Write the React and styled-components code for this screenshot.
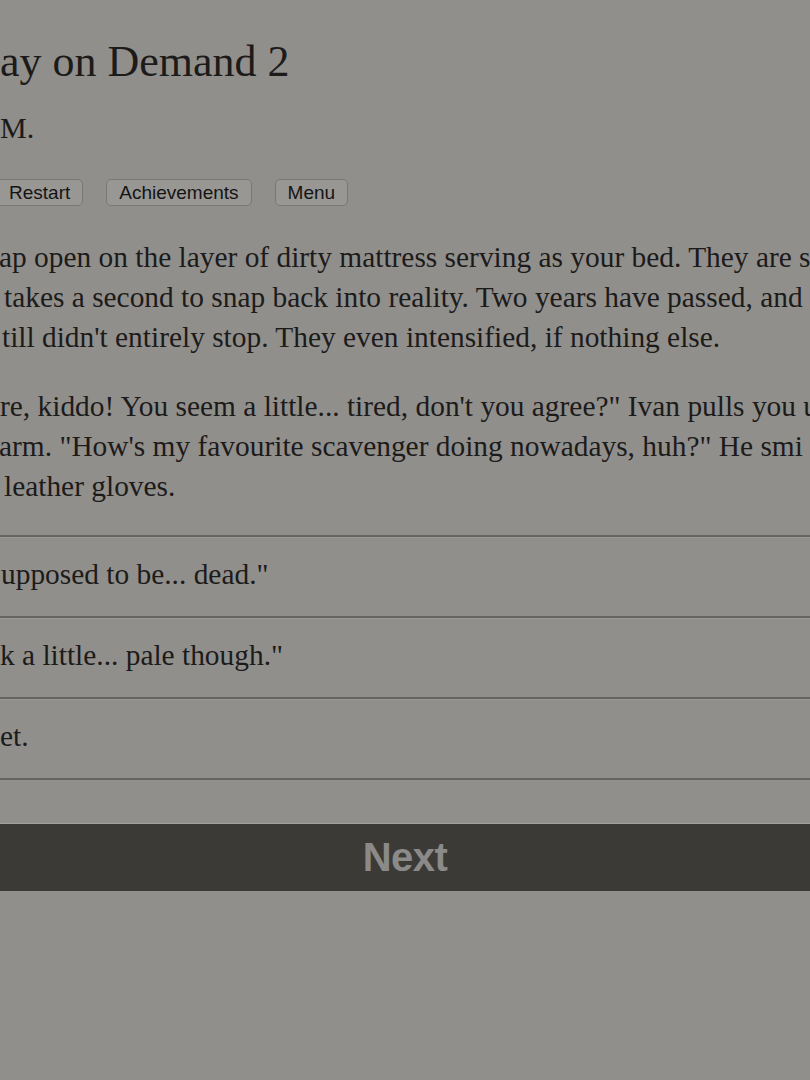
import styled, { createGlobalStyle } from "styled-components";

const GlobalStyle = createGlobalStyle`
  html, body {
    margin: 0;
    padding: 0;
    background: #918f8c;
    overflow: hidden;
  }
`;

const Screen = styled.div`
  width: 810px;
  height: 1080px;
  overflow: hidden;
  background: #918f8c;
  color: #1c1b1a;
  font-family: "Liberation Serif", "Times New Roman", serif;
`;

const Column = styled.div`
  display: flex;
  flex-direction: column;
`;

const Title = styled.h1`
  margin: 36px 0 0;
  font-size: 44px;
  font-weight: normal;
  line-height: 52px;
  white-space: nowrap;
`;

const Author = styled.h2`
  margin: 20px 0 0;
  font-size: 30px;
  font-weight: normal;
  line-height: 40px;
  white-space: nowrap;
`;

const ButtonBar = styled.div`
  display: flex;
  gap: 23px;
  margin: 31px 0 0 -4px;
`;

const StatButton = styled.button`
  height: 27px;
  padding: 0 12px;
  border: 1px solid #7a7876;
  border-radius: 5px;
  background: #999794;
  color: #141414;
  font-family: "Liberation Sans", Arial, sans-serif;
  font-size: 19px;
  line-height: 25px;
`;

const Paragraph = styled.p`
  margin: ${(p) => p.$top}px 0 0;
  font-size: 29.4px;
  line-height: 40px;
`;

const Line = styled.span`
  display: block;
  white-space: nowrap;
  margin-left: ${(p) => p.$shift || 0}px;
`;

const Choices = styled.div`
  margin-top: 29px;
  display: flex;
  flex-direction: column;
  border-bottom: 2px solid #666462;
`;

const Choice = styled.div`
  height: 81px;
  box-sizing: border-box;
  border-top: 2px solid #666462;
  box-shadow: inset 0 1px 0 #9b9996;
  display: flex;
  align-items: center;
  font-size: 29.4px;
  line-height: 40px;
  white-space: nowrap;
  padding-left: ${(p) => p.$shift || 0}px;
  padding-bottom: 6px;
`;

const NextBar = styled.div`
  margin-top: 43px;
  height: 67px;
  background: #3b3a37;
  border-top: 1px solid #a3a19e;
  display: flex;
  align-items: center;
  justify-content: center;
  color: #8b8a88;
  font-family: "Liberation Sans", Arial, sans-serif;
  font-weight: bold;
  font-size: 40px;
  letter-spacing: -0.5px;
`;

const story = [
  {
    top: 31,
    lines: [
      { text: "ap open on the layer of dirty mattress serving as your bed. They are s", shift: -1 },
      { text: "takes a second to snap back into reality. Two years have passed, and", shift: 4 },
      { text: "till didn't entirely stop. They even intensified, if nothing else.", shift: 2 },
    ],
  },
  {
    top: 29,
    lines: [
      { text: "re, kiddo! You seem a little... tired, don't you agree?\" Ivan pulls you u", shift: 0 },
      { text: "arm. \"How's my favourite scavenger doing nowadays, huh?\" He smi", shift: -1 },
      { text: "leather gloves.", shift: 4 },
    ],
  },
];

const options = [
  { text: "upposed to be... dead.\"", shift: 1 },
  { text: "k a little... pale though.\"", shift: -3 },
  { text: "et.", shift: -1 },
];

export default function App() {
  return (
    <Screen>
      <GlobalStyle />
      <Column>
        <Title>ay on Demand 2</Title>
        <Author>M.</Author>
        <ButtonBar>
          <StatButton>Restart</StatButton>
          <StatButton>Achievements</StatButton>
          <StatButton>Menu</StatButton>
        </ButtonBar>
        {story.map((para, i) => (
          <Paragraph key={i} $top={para.top}>
            {para.lines.map((line, j) => (
              <Line key={j} $shift={line.shift}>
                {line.text}
              </Line>
            ))}
          </Paragraph>
        ))}
        <Choices>
          {options.map((opt, i) => (
            <Choice key={i} $shift={opt.shift}>
              {opt.text}
            </Choice>
          ))}
        </Choices>
        <NextBar>Next</NextBar>
      </Column>
    </Screen>
  );
}
